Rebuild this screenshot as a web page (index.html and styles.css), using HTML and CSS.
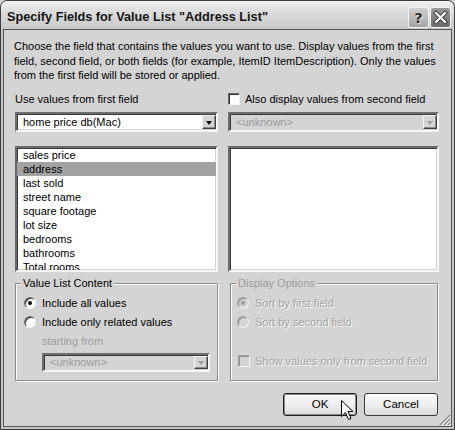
FILE: index.html
```html
<!DOCTYPE html>
<html>
<head>
<meta charset="utf-8">
<link rel="stylesheet" href="styles.css">
</head>
<body>
<div class="window">
  <div class="titlebar">
    <span class="title">Specify Fields for Value List "Address List"</span>
    <div class="tb-buttons">
      <span class="tb-btn help">?</span>
      <span class="tb-btn close">
        <svg width="21" height="21" viewBox="0 0 21 21">
          <path d="M6 6 L15 15 M15 6 L6 15" stroke="#3a3a3a" stroke-width="4" stroke-linecap="square"/>
          <path d="M6 6 L15 15 M15 6 L6 15" stroke="#ffffff" stroke-width="2.2" stroke-linecap="square"/>
        </svg>
      </span>
    </div>
  </div>
  <div class="client">
    <p class="intro">Choose the field that contains the values you want to use. Display values from the first<br>field, second field, or both fields (for example, ItemID ItemDescription). Only the values<br>from the first field will be stored or applied.</p>
    <div class="fields">
      <div class="label-row">Use values from first field</div>
      <div class="label-row"><span class="checkbox"></span>Also display values from second field</div>
      <div class="combo">
        <span class="combo-text">home price db(Mac)</span>
        <span class="combo-btn"><span class="arrow"></span></span>
      </div>
      <div class="combo disabled">
        <span class="combo-text">&lt;unknown&gt;</span>
        <span class="combo-btn"><span class="arrow"></span></span>
      </div>
      <ul class="listbox">
        <li>sales price</li>
        <li class="selected">address</li>
        <li>last sold</li>
        <li>street name</li>
        <li>square footage</li>
        <li>lot size</li>
        <li>bedrooms</li>
        <li>bathrooms</li>
        <li>Total rooms</li>
      </ul>
      <div class="listbox"></div>
    </div>
    <div class="groups">
      <div class="group group-left">
        <span class="legend">Value List Content</span>
        <div class="opt"><span class="radio checked"></span>Include all values</div>
        <div class="opt"><span class="radio"></span>Include only related values</div>
        <div class="opt sub disabled-text">starting from</div>
        <div class="combo disabled small">
          <span class="combo-text">&lt;unknown&gt;</span>
          <span class="combo-btn"><span class="arrow"></span></span>
        </div>
      </div>
      <div class="group group-right disabled-group">
        <span class="legend">Display Options</span>
        <div class="opt"><span class="radio checked"></span>Sort by first field</div>
        <div class="opt"><span class="radio"></span>Sort by second field</div>
        <div class="opt check-opt"><span class="checkbox"></span>Show values only from second field</div>
      </div>
    </div>
    <div class="buttons">
      <span class="btn default">OK</span>
      <span class="btn">Cancel</span>
    </div>
  </div>
  <svg class="cursor" width="13" height="21" viewBox="0 0 13 21">
    <path d="M0.5 0.5 L0.5 16.5 L4.5 12.5 L7.5 19.5 L10 18.5 L7 11.5 L12 11.5 Z" fill="#fff" stroke="#000" stroke-width="1" stroke-linejoin="miter"/>
  </svg>
  <svg class="grip" width="12" height="12" viewBox="0 0 12 12">
    <path d="M11 1 L1 11 M11 5 L5 11 M11 9 L9 11" stroke="#8a8a8a" stroke-width="1.2"/>
    <path d="M12 2 L2 12 M12 6 L6 12 M12 10 L10 12" stroke="#ffffff" stroke-width="1"/>
  </svg>
</div>
</body>
</html>
```

FILE: styles.css
```css
html, body {
  margin: 0;
  padding: 0;
  background: #d4d4d4;
}

body {
  font-family: "Liberation Sans", Arial, sans-serif;
  font-size: 11px;
  color: #000;
}

.window {
  position: relative;
  width: 455px;
  height: 430px;
  box-sizing: border-box;
  display: flex;
  flex-direction: column;
  background: #c4c4c4;
  border: 1px solid #3c3c3c;
  border-radius: 7px 7px 0 0;
  padding: 0 2px 2px;
  overflow: hidden;
}

.titlebar {
  height: 28px;
  margin: 0 -2px;
  display: flex;
  align-items: flex-start;
  justify-content: space-between;
  padding: 0 3px 0 6px;
  background: linear-gradient(#f2f2f2 0%, #e0e0e0 30%, #d2d2d2 70%, #c8c8c8 100%);
  border-radius: 6px 6px 0 0;
}

.title {
  font-weight: bold;
  font-size: 12.7px;
  line-height: 15px;
  margin-top: 9px;
  color: #151515;
}

.tb-buttons {
  display: flex;
  gap: 1px;
  margin-top: 6px;
}

.tb-btn {
  width: 21px;
  height: 21px;
  box-sizing: border-box;
  border: 1px solid #f4f4f4;
  border-radius: 3px;
  display: flex;
  align-items: center;
  justify-content: center;
  overflow: hidden;
}

.help {
  background: linear-gradient(#d0d0d0, #a4a4a4);
  font-family: "DejaVu Sans", sans-serif;
  font-weight: bold;
  font-size: 14px;
  color: #2a2a2a;
  text-shadow: 1px 1px 0 #e6e6e6;
}

.close {
  background: linear-gradient(#9a9a9a, #6c6c6c);
}

.close svg {
  display: block;
  margin: -1px;
}

.client {
  flex: 1;
  border: 1px solid #555;
  background: #d4d4d4;
  padding: 9px 12px 0 11px;
  display: flex;
  flex-direction: column;
}

.intro {
  margin: 0 0 0 -1px;
  line-height: 14.5px;
  white-space: nowrap;
}

.fields {
  display: grid;
  grid-template-columns: 203px 211px;
  column-gap: 10px;
  margin-top: 9px;
}

.label-row {
  height: 14px;
  line-height: 14px;
  display: flex;
  align-items: center;
}

.checkbox {
  width: 12px;
  height: 12px;
  box-sizing: border-box;
  background: #fff;
  border: 1px solid;
  border-color: #6e6e6e #f4f4f4 #f4f4f4 #6e6e6e;
  box-shadow: inset 1px 1px 0 #303030;
  margin-right: 5px;
  flex: none;
}

.combo {
  margin-top: 6.5px;
  height: 20px;
  box-sizing: border-box;
  background: #fff;
  border: 2px solid;
  border-color: #6e6e6e #f6f6f6 #f6f6f6 #6e6e6e;
  box-shadow: inset 1px 1px 0 #3a3a3a, inset -1px -1px 0 #d4d4d4;
  display: flex;
  align-items: center;
  justify-content: space-between;
}

.combo-text {
  padding-left: 6px;
  line-height: 14px;
}

.combo-btn {
  width: 14px;
  height: 14px;
  box-sizing: border-box;
  margin: 0 0 0 0;
  background: #d4d4d4;
  border: 1px solid;
  border-color: #f4f4f4 #404040 #404040 #f4f4f4;
  box-shadow: inset -1px -1px 0 #8a8a8a;
  display: flex;
  align-items: center;
  justify-content: center;
}

.arrow {
  width: 0;
  height: 0;
  border-left: 3.5px solid transparent;
  border-right: 3.5px solid transparent;
  border-top: 4px solid #000;
  margin-top: 1px;
}

.combo.disabled {
  background: #d4d4d4;
}

.combo.disabled .combo-text {
  color: #9c9c9c;
}

.combo.disabled .arrow {
  border-top-color: #9c9c9c;
}

.listbox {
  margin: 14px 0 0;
  padding: 0;
  list-style: none;
  height: 126px;
  box-sizing: border-box;
  background: #fff;
  border: 2px solid;
  border-color: #6a6a6a #f6f6f6 #f6f6f6 #6a6a6a;
  box-shadow: inset 1px 1px 0 #3a3a3a, inset -1px -1px 0 #d4d4d4;
  overflow: hidden;
}

.listbox li {
  height: 14px;
  line-height: 14px;
  padding-left: 6px;
  white-space: nowrap;
}

.listbox li.selected {
  background: #a2a2a2;
}

.groups {
  display: grid;
  grid-template-columns: 203px 208px;
  column-gap: 12px;
  margin-top: 10.5px;
}

.group {
  position: relative;
  height: 98px;
  box-sizing: border-box;
  border: 1px solid #8c8c8c;
  box-shadow: inset 1px 1px 0 #fbfbfb, 1px 1px 0 #fbfbfb;
  padding-top: 10px;
  display: flex;
  flex-direction: column;
}

.legend {
  position: absolute;
  top: -8px;
  left: 5px;
  padding: 0 2px;
  line-height: 14px;
  background: #d4d4d4;
}

.opt {
  height: 19px;
  display: flex;
  align-items: center;
  white-space: nowrap;
}

.group-left .opt {
  padding-left: 8px;
}

.group-left .opt.sub {
  padding-left: 26px;
}

.group-right .opt {
  padding-left: 6px;
}

.group-right .check-opt {
  padding-left: 7px;
  margin-top: 19.5px;
}

.radio {
  position: relative;
  width: 12px;
  height: 12px;
  box-sizing: border-box;
  border-radius: 50%;
  background: #fff;
  border: 1px solid;
  border-color: #707070 #f4f4f4 #f4f4f4 #707070;
  box-shadow: inset 1px 1px 0 #303030;
  margin-right: 6px;
  flex: none;
}

.radio.checked::after {
  content: "";
  position: absolute;
  left: 3px;
  top: 3px;
  width: 4px;
  height: 4px;
  border-radius: 50%;
  background: #000;
}

.disabled-text {
  color: #9c9c9c;
}

.combo.small {
  margin: 2px 0 0 26px;
  width: 168px;
  height: 19px;
}

.combo.small .combo-btn {
  height: 13px;
}

.disabled-group .legend {
  color: #9c9c9c;
}

.disabled-group .opt {
  color: #a4a4a4;
  text-shadow: 1px 1px 0 #f8f8f8;
}

.disabled-group .radio,
.disabled-group .checkbox {
  background: #d4d4d4;
  box-shadow: inset 1px 1px 0 #909090;
  border-color: #a0a0a0 #f4f4f4 #f4f4f4 #a0a0a0;
}

.disabled-group .radio.checked::after {
  background: #9a9a9a;
}

.buttons {
  display: flex;
  justify-content: flex-end;
  gap: 7px;
  margin-top: 12px;
  padding-right: 1px;
}

.btn {
  width: 74px;
  height: 23px;
  box-sizing: border-box;
  border: 1px solid #3a3a3a;
  border-radius: 3px;
  background: linear-gradient(#fafafa, #ececec 60%, #d8d8d8);
  display: flex;
  align-items: center;
  justify-content: center;
  font-size: 11.5px;
}

.btn.default {
  border: 1px solid #1e1e1e;
  box-shadow: inset 0 0 0 1px #8a8a8a;
}

.cursor {
  position: absolute;
  left: 340px;
  top: 399px;
}

.grip {
  position: absolute;
  right: 3px;
  bottom: 3px;
}
```
